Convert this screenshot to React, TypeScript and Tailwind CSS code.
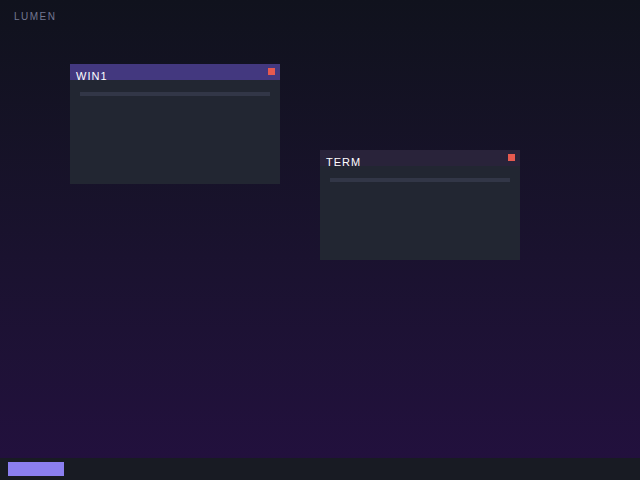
export default function App() {
  const windows = [
    { id: 'win1', title: 'WIN1', x: 70, y: 64, w: 210, h: 120, active: true },
    { id: 'term', title: 'TERM', x: 320, y: 150, w: 200, h: 110, active: false },
  ];

  return (
    <div
      className="w-[640px] h-[480px] flex flex-col bg-gradient-to-b from-[#10121d] to-[#23103f] overflow-hidden"
      style={{ fontFamily: '"Liberation Sans", Arial, sans-serif' }}
    >
      {/* desktop */}
      <div className="relative flex-1">
        <div className="absolute left-[14px] top-[11px] text-[10px] leading-[12px] tracking-[1.5px] text-[#737891]">
          LUMEN
        </div>

        {windows.map((win) => (
          <div
            key={win.id}
            className="absolute flex flex-col bg-[#222632]"
            style={{ left: win.x, top: win.y, width: win.w, height: win.h }}
          >
            <div
              className={`h-4 flex justify-between overflow-hidden ${
                win.active ? 'bg-[#43387f]' : 'bg-[#29233a]'
              }`}
            >
              <span className="pl-[6px] pt-[5px] text-[11px] leading-[14px] tracking-[1px] text-white">
                {win.title}
              </span>
              <span className="mt-1 mr-[5px] w-[7px] h-[7px] bg-[#e65a4f]" />
            </div>
            <div className="px-[10px] pt-3">
              <div className="h-1 bg-[#323647]" />
            </div>
          </div>
        ))}
      </div>

      {/* taskbar */}
      <div className="h-[22px] bg-[#181b23] flex items-center px-2">
        <div className="w-14 h-[14px] bg-[#8b7ff0]" />
      </div>
    </div>
  );
}
